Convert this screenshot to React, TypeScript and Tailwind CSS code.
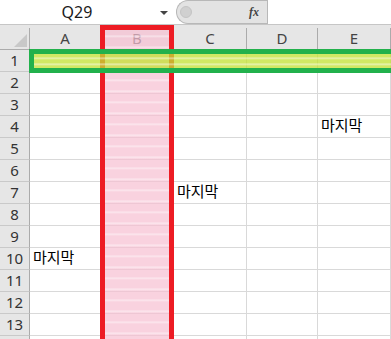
import React from "react";

const cols = ["A", "B", "C", "D", "E"];
const rows = Array.from({ length: 14 }, (_, i) => i + 1);

// row -> col index -> text
const cells: Record<number, Record<number, string>> = {
  4: { 4: "마지막" },
  7: { 2: "마지막" },
  10: { 0: "마지막" },
};

export default function App() {
  return (
    <div
      className="relative w-[391px] h-[339px] overflow-hidden bg-white text-[#222]"
      style={{ fontFamily: '"Noto Sans", "Noto Sans CJK KR", sans-serif' }}
    >
      {/* formula bar */}
      <div className="flex h-[25px] border-b border-[#c6c6c6] bg-white">
        <div className="relative w-[176px] flex items-center justify-center">
          <span className="text-[16px] text-[#1a1a1a] -ml-[22px]">Q29</span>
          <span className="absolute right-[8px] top-[11px] w-0 h-0 border-l-[4px] border-r-[4px] border-t-[4px] border-l-transparent border-r-transparent border-t-[#444]" />
        </div>
        <div className="flex items-center w-[91px] h-[24px] bg-[#e3e3e3] border border-r-0 border-[#b8b8b8] rounded-l-[12px]">
          <div className="ml-[3px] w-[12px] h-[12px] rounded-full bg-[#d0d0d0] border border-[#c4c4c4]" />
          <span className="ml-auto mr-[8px] text-[12px] italic font-bold text-[#444]" style={{ fontFamily: '"Liberation Serif", serif' }}>
            fx
          </span>
        </div>
        <div className="flex-1 border-l border-[#b8b8b8] bg-white" />
      </div>
      <div className="h-[3px] bg-[#e6e6e6]" />

      {/* grid */}
      <div className="grid grid-cols-[30px_71px_73px_73px_71px_73px] auto-rows-[22px]">
        <div className="relative bg-[#e6e6e6] border-r border-b border-[#ababab]">
          <div className="absolute right-[2px] bottom-[2px] w-0 h-0" style={{ borderBottom: "13px solid #c8c8c8", borderLeft: "13px solid transparent" }} />
        </div>
        {cols.map((c) => (
          <div
            key={c}
            className="bg-[#e6e6e6] border-r border-b border-[#ababab] flex items-center justify-center text-[15px] text-[#444]"
          >
            {c}
          </div>
        ))}
        {rows.map((r) => (
          <React.Fragment key={r}>
            <div className="bg-[#e6e6e6] border-r border-b border-r-[#ababab] border-b-[#c9c9c9] flex items-center justify-center text-[15px] text-[#333]">
              {r < 14 ? r : ""}
            </div>
            {cols.map((c, ci) => (
              <div
                key={c}
                className="border-r border-b border-[#d9d9d9] flex items-end pl-[3px] pb-[1px] whitespace-nowrap text-[15px] text-black"
                style={{ fontFamily: '"Noto Sans CJK KR", sans-serif' }}
              >
                {cells[r]?.[ci] ?? ""}
              </div>
            ))}
          </React.Fragment>
        ))}
      </div>

      {/* column B highlight */}
      <div
        className="absolute left-[100px] top-[25px] w-[74px] h-[330px] border-[5px] border-[#ed1c24] bg-[#f7bfd1]/70"
        style={{
          backgroundImage:
            "repeating-linear-gradient(180deg, rgba(255,255,255,0) 0px, rgba(255,255,255,0) 5px, rgba(255,255,255,0.5) 6px, rgba(255,255,255,0) 8px, rgba(255,255,255,0) 11px)",
        }}
      />

      {/* row 1 highlight */}
      <div
        className="absolute left-[29px] top-[49px] w-[380px] h-[24px] border-[5px] border-[#22b14c] bg-[#c2e030]/75"
        style={{
          backgroundImage:
            "repeating-linear-gradient(180deg, rgba(255,255,255,0) 0px, rgba(255,255,255,0) 3px, rgba(255,255,255,0.55) 4px, rgba(255,255,255,0) 6px)",
        }}
      />
    </div>
  );
}
